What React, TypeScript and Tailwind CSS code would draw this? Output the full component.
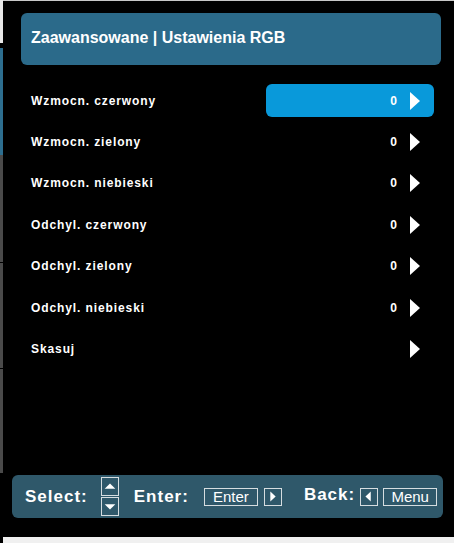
const rows = [
  { label: "Wzmocn. czerwony", value: "0", active: true },
  { label: "Wzmocn. zielony", value: "0" },
  { label: "Wzmocn. niebieski", value: "0" },
  { label: "Odchyl. czerwony", value: "0" },
  { label: "Odchyl. zielony", value: "0" },
  { label: "Odchyl. niebieski", value: "0" },
  { label: "Skasuj", value: "" },
];

const Arrow = () => (
  <svg width="10" height="18" viewBox="0 0 10 18" className="block">
    <polygon points="0,0 10,9 0,18" fill="#ffffff" />
  </svg>
);

// small outlined key boxes in the footer
const KeyBox = ({ dir }: { dir: "up" | "down" | "left" | "right" }) => {
  const pts = {
    up: "3,11 9,5 15,11",
    down: "3,6 9,12 15,6",
    left: "11,3 5,8.5 11,14",
    right: "6,3 12,8.5 6,14",
  }[dir];
  const tall = dir === "up" || dir === "down";
  return (
    <div className={`border border-[#d6dde0] w-[18px] ${tall ? "h-[19px]" : "h-[18px]"} flex items-center justify-center`}>
      <svg width="18" height="17" viewBox="0 0 18 17" className="block">
        <polygon points={pts} fill="#ffffff" />
      </svg>
    </div>
  );
};

const App = () => {
  return (
    <div className="flex w-[454px] h-[543px] bg-black overflow-hidden text-white font-['Liberation_Sans',Arial,sans-serif]">
      {/* left edge remnants of the window behind */}
      <div className="w-[3px] flex flex-col shrink-0">
        <div className="h-[43px] bg-[#e8e8e8]" />
        <div className="h-[5px] bg-black" />
        <div className="h-[107px] bg-[#2d6e8f]" />
        <div className="h-[107px] bg-[#4a4a4a]" />
        <div className="h-px bg-black" />
        <div className="h-[105px] bg-[#4a4a4a]" />
        <div className="h-px bg-black" />
        <div className="h-[104px] bg-[#4a4a4a]" />
      </div>

      <div className="flex-1 flex flex-col">
        <div className="h-px bg-[#c8c8c8]" />

        <div className="mt-[12px] ml-[18px] w-[420px] h-[52px] rounded-[6px] bg-[#2b6a8a] flex items-center pl-[10px] pb-[2px]">
          <span className="text-[16px] font-bold">Zaawansowane | Ustawienia RGB</span>
        </div>

        <div className="mt-[15px] flex flex-col">
          {rows.map((r) => (
            <div key={r.label} className="h-[41.4px] flex items-center">
              <span className="flex-1 pl-[28px] text-[12px] font-bold tracking-[0.9px]">{r.label}</span>
              <div
                className={`mr-[20px] w-[168px] h-[33px] rounded-[6px] flex items-center justify-end pr-[14px] ${
                  r.active ? "bg-[#0999da]" : ""
                }`}
              >
                <span className="text-[12px] font-bold mr-[13px]">{r.value}</span>
                <Arrow />
              </div>
            </div>
          ))}
        </div>

        <div className="mt-auto mb-[19px] ml-[9px] w-[431px] h-[43px] rounded-[6px] bg-[#2f586a] flex items-center pl-[13px]">
          <span className="text-[17px] font-bold tracking-[1px]">Select:</span>
          <div className="ml-[13px] flex flex-col gap-[1px]">
            <KeyBox dir="up" />
            <KeyBox dir="down" />
          </div>
          <span className="ml-[15px] text-[17px] font-bold tracking-[1px]">Enter:</span>
          <div className="ml-[15px] w-[54px] h-[18px] border border-[#d6dde0] flex items-center justify-center text-[15px] leading-none">
            Enter
          </div>
          <div className="ml-[6px]">
            <KeyBox dir="right" />
          </div>
          <span className="ml-[22px] text-[17px] font-bold tracking-[1px] mb-[3px]">Back:</span>
          <div className="ml-[5px]">
            <KeyBox dir="left" />
          </div>
          <div className="ml-[5px] w-[54px] h-[18px] border border-[#d6dde0] flex items-center justify-center text-[15px] leading-none">
            Menu
          </div>
        </div>

        <div className="h-[6px] bg-[#f0f0f0]" />
      </div>
    </div>
  );
};

export default App;
